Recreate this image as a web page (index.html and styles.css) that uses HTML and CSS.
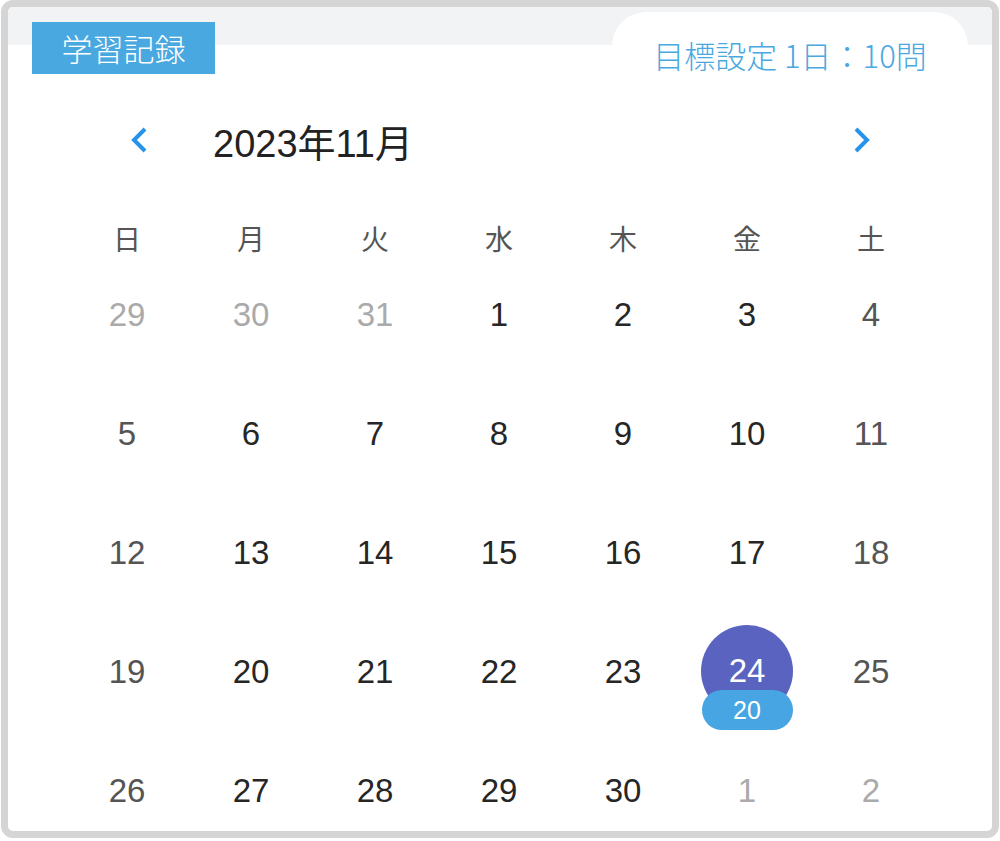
FILE: index.html
```html
<!doctype html>
<html>
<head>
<meta charset="utf-8">
<title>学習記録</title>
<link rel="stylesheet" href="styles.css">
</head>
<body>
<div class="frame">
    <div class="top">
        <div class="tag">学習記録</div>
        <div class="goal">目標設定 1日：10問</div>
    </div>
    <div class="cal">
        <div class="calHead">
            <a href="javascript:;" class="arrow"><svg width="18" height="28" viewBox="0 0 18 28"><polyline points="15,3 4,14 15,25" fill="none" stroke="#2793ea" stroke-width="4"/></svg></a>
            <div class="month">2023年11月</div>
            <a href="javascript:;" class="arrow next"><svg width="18" height="28" viewBox="0 0 18 28"><polyline points="3,3 14,14 3,25" fill="none" stroke="#2793ea" stroke-width="4"/></svg></a>
        </div>
        <ul class="week">
            <li>日</li><li>月</li><li>火</li><li>水</li><li>木</li><li>金</li><li>土</li>
        </ul>
        <ul class="days">
            <li class="off">29</li><li class="off">30</li><li class="off">31</li><li>1</li><li>2</li><li>3</li><li class="end">4</li>
            <li class="end">5</li><li>6</li><li>7</li><li>8</li><li>9</li><li>10</li><li class="end">11</li>
            <li class="end">12</li><li>13</li><li>14</li><li>15</li><li>16</li><li>17</li><li class="end">18</li>
            <li class="end">19</li><li>20</li><li>21</li><li>22</li><li>23</li>
            <li class="sel"><span class="circle">24</span><span class="count">20</span></li>
            <li class="end">25</li>
            <li class="end">26</li><li>27</li><li>28</li><li>29</li><li>30</li><li class="off">1</li><li class="off">2</li>
        </ul>
    </div>
</div>
</body>
</html>
```

FILE: styles.css
```css
*{ margin:0; padding:0; box-sizing:border-box}
a{ text-decoration:none;}
ul{ list-style:none}
body{ font-family:"Liberation Sans","Noto Sans CJK JP",sans-serif; background:#fff;}
.frame{ width:998px; height:838px; margin:0 1px; border:7px solid #d5d5d5; border-radius:12px; overflow:hidden; background:#fff;}

.top{ display:flex; justify-content:space-between; align-items:flex-start; height:67px; background:linear-gradient(#f2f3f5 38px,#fff 38px);}
.top .tag{ margin:15px 0 0 24px; width:183px; height:52px; background:#4aa8e1; color:#fff; font-size:31px; line-height:52px; text-align:center; font-family:"Noto Sans CJK JP",sans-serif; font-weight:300;}
.top .goal{ margin:5px 24px 0 0; width:356px; height:62px; background:#fff; border-radius:34px 34px 0 0; color:#4aa8e1; font-size:31px; line-height:40px; padding-top:23px; text-align:center; font-family:"Noto Sans CJK JP",sans-serif; font-weight:300;}

.cal{ margin-left:57px; width:868px;}
.calHead{ display:flex; align-items:center; height:80px; margin-top:26px;}
.calHead .arrow{ display:block; width:18px; height:28px; margin-left:65px;}
.calHead .arrow svg{ display:block;}
.calHead .month{ margin-left:65px; font-size:38px; color:#222; font-family:"Liberation Sans","Noto Sans CJK JP",sans-serif;}
.calHead .next{ margin-left:auto; margin-right:62px;}

.week{ display:grid; grid-template-columns:repeat(7,124px); margin-top:33px; height:53px;}
.week li{ text-align:center; font-size:28px; line-height:50px; color:#555; font-family:"Noto Sans CJK JP",sans-serif;}

.days{ display:grid; grid-template-columns:repeat(7,124px); grid-auto-rows:119px;}
.days li{ display:flex; flex-direction:column; align-items:center; padding-top:29px; font-size:33px; line-height:40px; color:#262626;}
.days li.end{ color:#555;}
.days li.off{ color:#aaa;}
.days li.sel{ padding-top:2px;}
.days .circle{ display:block; width:92px; height:92px; border-radius:50%; background:#5b63c1; color:#fff; text-align:center; line-height:92px;}
.days .count{ display:block; width:91px; height:40px; margin-top:-27px; border-radius:20px; background:#46a5e2; color:#fff; font-size:25px; line-height:40px; text-align:center;}
```
